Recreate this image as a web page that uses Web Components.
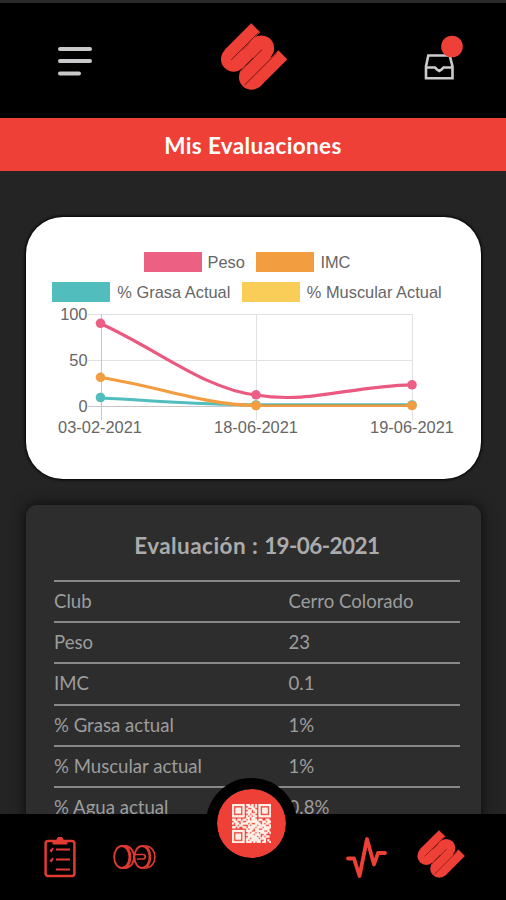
<!DOCTYPE html>
<html lang="es">
<head>
<meta charset="UTF-8">
<meta name="viewport" content="width=device-width, initial-scale=1">
<title>Mis Evaluaciones</title>
<style>
    body {
        margin: 0;
        background: #242424;
        font-family: Lato, "Open Sans", sans-serif;
    }
</style>
</head>
<body>
<evaluations-app></evaluations-app>

<script>
class BrandLogo extends HTMLElement {
    constructor() {
        super();
        this.attachShadow({ mode: 'open' });
    }

    connectedCallback() {
        this.shadowRoot.innerHTML = `
            <style>
                :host { display: block; }
                svg { display: block; width: 100%; height: 100%; }
            </style>
            <svg viewBox="20 14 196 200">
                <g stroke="#ee4036" stroke-width="38" fill="none">
                    <path d="M123 28L44 107M130 76L70 136M157 105L97 165M204 109L122 191"/>
                </g>
                <g fill="#ee4036">
                    <circle cx="57" cy="122" r="37.500"/>
                    <circle cx="140" cy="89" r="38"/>
                    <circle cx="111" cy="175" r="38"/>
                </g>
                <path d="M50 124L131 43M79 156L142 93M90 199L186 103" stroke="#5a130e" stroke-width="2.600"/>
            </svg>
        `;
    }
}

class AppHeader extends HTMLElement {
    constructor() {
        super();
        this.attachShadow({ mode: 'open' });
    }

    connectedCallback() {
        this.shadowRoot.innerHTML = `
            <style>
                :host {
                    display: grid;
                    grid-template-columns: 1fr auto 1fr;
                    align-items: center;
                    box-sizing: border-box;
                    height: 118px;
                    padding: 0 42px 0 56px;
                    background: #000;
                    border-top: 3px solid #2a2a2a;
                }
                svg { display: block; }
                brand-logo { width: 66px; height: 67px; margin: 0 0 9px -12px; }
                .inbox { justify-self: end; margin-bottom: 5px; }
            </style>
            <svg width="38" height="32" stroke="#c9c9cb" stroke-width="4" stroke-linecap="round">
                <path d="M4 4H34M4 16H34M4 28.500H23"/>
            </svg>
            <brand-logo></brand-logo>
            <svg class="inbox" width="40" height="46" fill="none">
                <g stroke="#c9cbcd" stroke-width="2.600">
                    <path d="M4.300 20.500H25.700L28.500 31.500V43.200H2V31.500Z"/>
                    <path d="M2 32.500H11L13 34.500L15.300 36L17.500 34.500L19.500 32.500H28.500"/>
                </g>
                <circle cx="28" cy="11.500" r="10.800" fill="#ee4036"/>
            </svg>
        `;
    }
}

class PageBanner extends HTMLElement {
    constructor() {
        super();
        this.attachShadow({ mode: 'open' });
    }

    connectedCallback() {
        this.shadowRoot.innerHTML = `
            <style>
                :host {
                    display: flex;
                    align-items: center;
                    justify-content: center;
                    box-sizing: border-box;
                    height: 53px;
                    padding-top: 2px;
                    background: #ee4036;
                    color: #fff;
                    font-size: 22.5px;
                    font-weight: 700;
                    letter-spacing: .38px;
                }
            </style>
            <slot></slot>
        `;
    }
}

class EvaluationChart extends HTMLElement {
    constructor() {
        super();
        this.attachShadow({ mode: 'open' });
    }

    legendItem(label, color) {
        return `<span class="item"><i style="background:${color}"></i>${label}</span>`;
    }

    dots(color, values) {
        const xs = [100.5, 256, 412];
        return values.map((y, i) => `<circle cx="${xs[i]}" cy="${y}" r="4.8" fill="${color}"/>`).join('');
    }

    connectedCallback() {
        this.shadowRoot.innerHTML = `
            <style>
                :host {
                    display: block;
                    box-sizing: border-box;
                    height: 262px;
                    padding-top: 30px;
                    background: #fff;
                    border-radius: 37px;
                    overflow: hidden;
                    box-shadow: 0 0 3px 1px #000;
                    color: #666;
                    font-family: "Liberation Sans", Arial, sans-serif;
                    font-size: 16.4px;
                }
                .legend {
                    display: flex;
                    justify-content: center;
                    gap: 11.5px;
                    height: 30px;
                    line-height: 30px;
                    margin-right: 13px;
                }
                .item { display: flex; align-items: center; gap: 7px; white-space: nowrap; }
                .legend:first-of-type .item { gap: 6px; }
                i { width: 58px; height: 20.5px; }
                svg { display: block; margin-top: -2px; }
            </style>
            <div class="legend">
                ${this.legendItem('Peso', '#ec6084')}
                ${this.legendItem('IMC', '#f39d41')}
            </div>
            <div class="legend">
                ${this.legendItem('% Grasa Actual', '#51bdbd')}
                ${this.legendItem('% Muscular Actual', '#f9cd58')}
            </div>
            <svg width="455" height="174" viewBox="26 305 455 174">
                <path d="M88 314.500H412.500M88 360.500H412.500M256.500 314V420M412.500 314V420" stroke="#e2e2e2" fill="none"/>
                <path d="M88 406.500H412.500M101.500 314V420" stroke="#c6c6c6" fill="none"/>
                <g fill="none" stroke-width="3.200">
                    <path d="M100.500 398C160 401 200 404.800 256 404.800H412" stroke="#51bdbd"/>
                    ${this.dots('#51bdbd', [397.5, 405, 405])}
                    <path d="M100.500 377.500C162 387 200 404 256 405.500H412" stroke="#f39d41"/>
                    <path d="M262 404.600H406" stroke="#a79f63" stroke-width="1.400"/>
                    ${this.dots('#f39d41', [377.3, 405.5, 405.5])}
                    <path d="M100.500 323.500C162 352 205 389 256 395C310 404 350 386 412 384.800" stroke="#ea5a80"/>
                    ${this.dots('#ec5f87', [323.3, 394.8, 384.8])}
                </g>
                <g fill="#666" text-anchor="end">
                    <text x="87.500" y="320">100</text>
                    <text x="87.500" y="366">50</text>
                    <text x="87.500" y="412">0</text>
                </g>
                <g fill="#666" text-anchor="middle">
                    <text x="100" y="433">03-02-2021</text>
                    <text x="256" y="433">18-06-2021</text>
                    <text x="412" y="433">19-06-2021</text>
                </g>
            </svg>
        `;
    }
}

class EvaluationDetail extends HTMLElement {
    constructor() {
        super();
        this.attachShadow({ mode: 'open' });
    }

    connectedCallback() {
        const rows = JSON.parse(this.getAttribute('rows') || '[]');

        this.shadowRoot.innerHTML = `
            <style>
                :host {
                    display: block;
                    padding: 0 21.5px 0 28px;
                    background: #2d2d2d;
                    border-radius: 11px;
                    box-shadow: 0 0 13px 2px rgba(0, 0, 0, .55);
                    color: #9d9d9d;
                }
                h2 {
                    margin: 0;
                    height: 74.5px;
                    line-height: 82px;
                    text-align: center;
                    font-size: 22.5px;
                    font-weight: 700;
                    color: #ababab;
                }
                .date { letter-spacing: -.6px; }
                .label { letter-spacing: .45px; }
                .row {
                    display: grid;
                    grid-template-columns: 234.5px 1fr;
                    box-sizing: border-box;
                    height: 41.4px;
                    border-top: 2.5px solid #888;
                    line-height: 38.6px;
                    font-size: 18.6px;
                }
            </style>
            <h2><span class="label">Evaluación : </span><span class="date">${this.getAttribute('date')}</span></h2>
            ${rows.map(([label, value]) => `
                <div class="row"><span>${label}</span><span>${value}</span></div>
            `).join('')}
        `;
    }
}

class QrGlyph extends HTMLElement {
    constructor() {
        super();
        this.attachShadow({ mode: 'open' });
    }

    connectedCallback() {
        const map = [
            '1111111011010101111111',
            '1000001001110101000001',
            '1011101010011001011101',
            '1011101001101101011101',
            '1011101011100101011101',
            '1000001001011001000001',
            '1111111010101101111111',
            '0000000011011000000000',
            '1101101101011101100110',
            '0110010011111110011011',
            '1011011110100111010110',
            '0010110001011101111001',
            '1101001101111011101111',
            '0000000010110110011110',
            '1111111011100111110010',
            '1000001001011010111101',
            '1011101011110111001000',
            '1011101001111101010110',
            '1011101011011110111000',
            '1000001010111111001010',
            '1111111011101011011001'
        ];
        let d = '';
        map.forEach((row, y) => {
            [...row].forEach((bit, x) => {
                if (bit === '1') d += `M${x} ${y}h1.08v1.08h-1.08z`;
            });
        });
        this.shadowRoot.innerHTML = `
            <style>
                :host { display: block; width: 39px; height: 39px; }
                svg { display: block; width: 100%; height: 100%; }
            </style>
            <svg viewBox="0 0 22 21" preserveAspectRatio="none">
                <path d="${d}" fill="#fff0e8" stroke="#fff0e8" stroke-width=".2"/>
            </svg>
        `;
    }
}

class BottomNav extends HTMLElement {
    constructor() {
        super();
        this.attachShadow({ mode: 'open' });
    }

    connectedCallback() {
        this.shadowRoot.innerHTML = `
            <style>
                :host {
                    position: relative;
                    display: flex;
                    align-items: center;
                    box-sizing: border-box;
                    height: 86px;
                    padding: 0 41px 0 44px;
                    background: #000;
                }
                svg { display: block; }
                .weights { margin-left: 37px; }
                .pulse { margin-left: auto; }
                brand-logo { width: 48px; height: 48px; margin: 0 0 6px 30px; }
                /* round button that rises over the bar */
                .scan {
                    position: absolute;
                    left: 205.5px;
                    top: -36px;
                    display: grid;
                    place-items: center;
                    box-sizing: border-box;
                    width: 91px;
                    height: 91px;
                    border: 11.5px solid #000;
                    border-radius: 50%;
                    background: #ee4036;
                    background-clip: padding-box;
                }
            </style>
            <svg width="32" height="42" fill="none" stroke="#e23b31" stroke-width="2.500">
                <rect x="1.600" y="5" width="28.800" height="35" rx="2.500"/>
                <path d="M9 8V6L12.500 4.500L14 1.500H18L19.500 4.500L23 6V8Z" fill="#e23b31" stroke-width="1"/>
                <path d="M12 13.500H26M12 23.500H26M12 33.500H26M6 14L7.300 15L9 12M6 24L7.300 25L9 22" stroke-width="1.900"/>
            </svg>
            <svg class="weights" width="43" height="26" fill="none" stroke="#df3930" stroke-width="1.900">
                <ellipse cx="8.800" cy="13" rx="7.600" ry="11"/>
                <path d="M9 2H13.500C23.500 4 23.500 22 13.500 24H9M14 3C18.500 9 18.500 17 14 23"/>
                <ellipse cx="29" cy="13" rx="7.600" ry="11"/>
                <path d="M29 2H34C44.500 4 44.500 22 34 24H29M34 3C38.500 9 38.500 17 34 23M22 10.500H30C33 10.500 33 15 30 15H24" stroke-width="1.700"/>
            </svg>
            <svg class="pulse" width="42" height="44" fill="none" stroke="#ee4036" stroke-width="3.800" stroke-linecap="round" stroke-linejoin="round">
                <path d="M3 23.500H9L14.500 41L22 4L29 29.500L33 18H40"/>
            </svg>
            <brand-logo></brand-logo>
            <div class="scan"><qr-glyph></qr-glyph></div>
        `;
    }
}

class EvaluationsApp extends HTMLElement {
    constructor() {
        super();
        this.attachShadow({ mode: 'open' });
    }

    connectedCallback() {
        const rows = [
            ['Club', 'Cerro Colorado'],
            ['Peso', '23'],
            ['IMC', '0.1'],
            ['% Grasa actual', '1%'],
            ['% Muscular actual', '1%'],
            ['% Agua actual', '0.8%']
        ];

        this.shadowRoot.innerHTML = `
            <style>
                :host {
                    display: flex;
                    flex-direction: column;
                    width: 506px;
                    height: 900px;
                    overflow: hidden;
                }
                main {
                    flex: 1;
                    min-height: 0;
                    overflow: hidden;
                    box-sizing: border-box;
                    padding: 46px 25px 0 26px;
                }
                evaluation-detail { margin-top: 26px; }
            </style>
            <app-header></app-header>
            <page-banner>Mis Evaluaciones</page-banner>
            <main>
                <evaluation-chart></evaluation-chart>
                <evaluation-detail date="19-06-2021" rows='${JSON.stringify(rows)}'></evaluation-detail>
            </main>
            <bottom-nav></bottom-nav>
        `;
    }
}

customElements.define('brand-logo', BrandLogo);
customElements.define('app-header', AppHeader);
customElements.define('page-banner', PageBanner);
customElements.define('evaluation-chart', EvaluationChart);
customElements.define('evaluation-detail', EvaluationDetail);
customElements.define('qr-glyph', QrGlyph);
customElements.define('bottom-nav', BottomNav);
customElements.define('evaluations-app', EvaluationsApp);
</script>
</body>
</html>
